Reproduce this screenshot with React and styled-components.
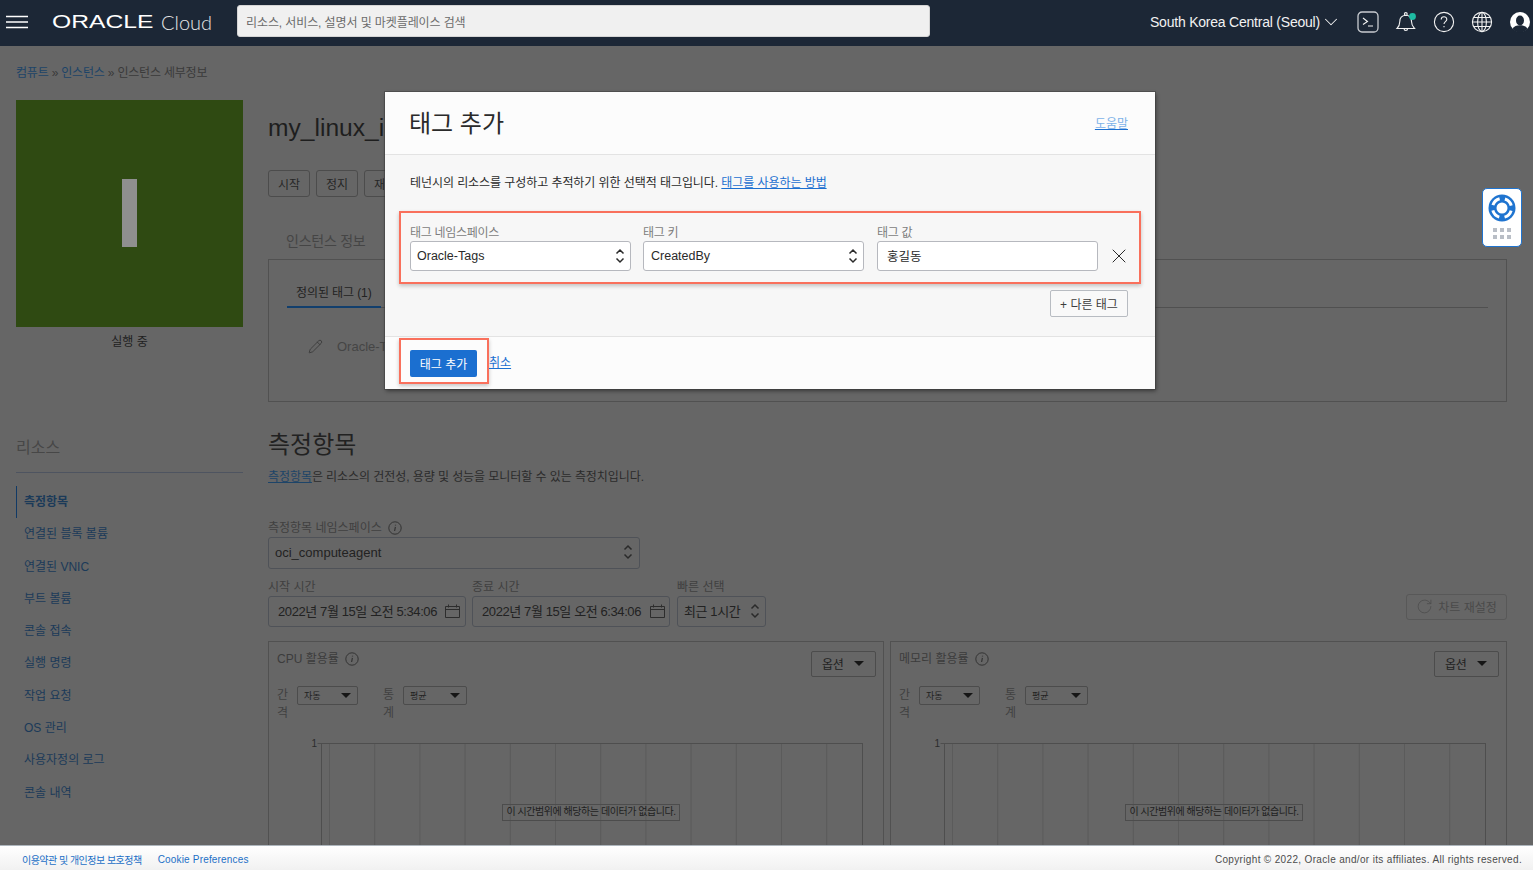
import React from 'react';
import styled, { createGlobalStyle } from 'styled-components';
import { ChevronDown, X, Pencil, RotateCw } from 'lucide-react';

const GlobalStyle = createGlobalStyle`
  html, body {
    margin: 0;
    height: 100%;
    overflow: hidden;
    font-family: 'Liberation Sans', 'Noto Sans CJK KR', sans-serif;
    font-size: 12px;
    color: #2b2b2b;
  }
  * {
    box-sizing: border-box;
  }
`;

const Page = styled.div`
  display: flex;
  flex-direction: column;
  height: 100vh;
`;

/* top bar */
const TopBar = styled.header`
  height: 46px;
  flex: none;
  padding-bottom: 3px;
  display: flex;
  align-items: center;
  background: #1c2736;
  color: #f2f2f2;
  > * {
    flex: none;
  }
`;

const Burger = styled.svg`
  margin-left: 6px;
  width: 22px;
  height: 14px;
`;

const LogoMark = styled.div`
  margin-left: 24px;
  width: 102px;
  height: 20px;
  display: flex;
  align-items: center;
`;

const LogoText = styled.span`
  font-family: 'Liberation Sans', sans-serif;
  font-size: 18px;
  line-height: 20px;
  color: #fff;
  transform: scale(1.37, 1);
  transform-origin: left center;
`;

const CloudText = styled.span`
  margin-left: 7px;
  width: 76px;
  font-family: 'Lato', sans-serif;
  font-weight: 300;
  font-size: 20px;
  color: #e6e6e6;
`;

const Search = styled.div`
  width: 693px;
  height: 32px;
  margin-top: -1px;
  padding-left: 8px;
  display: flex;
  align-items: center;
  background: #f0f0f0;
  border: 1px solid #d5d5d5;
  border-radius: 3px;
  color: #6b6b6b;
  font-size: 12px;
  letter-spacing: -0.1px;
`;

const Region = styled.div`
  margin-left: 220px;
  display: flex;
  align-items: center;
  font-size: 14px;
  letter-spacing: -0.22px;
  white-space: nowrap;
`;

const TopIcons = styled.div`
  margin-left: 15px;
  display: flex;
  align-items: center;
  gap: 16px;
`;

const TopIcon = styled.svg`
  width: 22px;
  height: 22px;
  display: block;
  fill: none;
  stroke: #f2f2f2;
  stroke-width: 1.1;
`;

/* dimmed page behind the dialog */
const Main = styled.main`
  position: relative;
  flex: 1;
  min-height: 0;
  overflow: hidden;
  padding-left: 16px;
  background: #666;
`;

const Crumbs = styled.div`
  margin-top: 19px;
  height: 14px;
  line-height: 16px;
  color: #3a3a3a;
  letter-spacing: -0.2px;
`;

const CrumbLink = styled.span`
  color: #1d4468;
`;

const Columns = styled.div`
  margin-top: 21px;
  display: flex;
  gap: 25px;
`;

const Sidebar = styled.aside`
  width: 227px;
  flex: none;
`;

const Tile = styled.div`
  width: 227px;
  height: 227px;
  padding-bottom: 2px;
  display: flex;
  align-items: center;
  justify-content: center;
  background: #2f4a12;
`;

const TileBar = styled.div`
  width: 15px;
  height: 68px;
  background: #8f8f8f;
`;

const TileState = styled.div`
  margin-top: 7px;
  line-height: 16px;
  text-align: center;
  color: #1f1f1f;
`;

const ResourceTitle = styled.h3`
  margin: 87px 0 0;
  padding-bottom: 13px;
  border-bottom: 1px solid #4e5460;
  font-size: 16px;
  line-height: 22px;
  font-weight: 400;
  color: #474747;
`;

const ResourceList = styled.ul`
  list-style: none;
  margin: 13px 0 0;
  padding: 0;
`;

const ResourceItem = styled.li`
  height: 32.3px;
  line-height: 32px;
  padding-left: ${(props) => (props.$active ? '7px' : '8px')};
  border-left: ${(props) => (props.$active ? '1px solid #113a66' : 'none')};
  font-weight: ${(props) => (props.$active ? 700 : 400)};
  color: #1b3a59;
`;

const Content = styled.section`
  width: 1239px;
  flex: none;
  padding-top: 13px;
`;

const Title = styled.h1`
  margin: 0;
  white-space: nowrap;
  font-size: 24.6px;
  line-height: 30px;
  font-weight: 400;
  color: #1e1e1e;
`;

const ActionRow = styled.div`
  margin-top: 27px;
  display: flex;
  gap: 6px;
`;

const GhostButton = styled.div`
  width: ${(props) => props.$width}px;
  height: 27px;
  padding: 0 9px 1px;
  display: flex;
  align-items: center;
  border: 1px solid #4c4c4c;
  border-radius: 3px;
  letter-spacing: -0.1px;
  color: #262626;
  white-space: nowrap;
`;

const InfoTab = styled.div`
  margin: 34px 0 0 18px;
  font-size: 14px;
  line-height: 20px;
  letter-spacing: -0.25px;
  color: #454545;
`;

const TagPanel = styled.div`
  margin-top: 8px;
  height: 143px;
  padding: 18px 18px 0;
  border: 1px solid #515151;
`;

const TagTabs = styled.div`
  height: 30px;
  border-bottom: 1px solid #505050;
`;

const TagTab = styled.div`
  width: 94px;
  height: 30px;
  padding: 7px 0 0 9px;
  border-bottom: 2px solid #123f6d;
  line-height: 16px;
  letter-spacing: -0.1px;
  color: #222;
  white-space: nowrap;
`;

const TagLine = styled.div`
  margin: 31px 0 0 21px;
  display: flex;
  align-items: center;
  gap: 14px;
  font-size: 13px;
  white-space: nowrap;
  color: #454545;
`;

const Heading = styled.h2`
  margin: 28px 0 0;
  font-size: 24px;
  line-height: 30px;
  font-weight: 400;
  color: #222;
`;

const Intro = styled.p`
  margin: 9px 0 0;
  line-height: 16px;
  letter-spacing: -0.07px;
  color: #2b2b2b;
`;

const Underlined = styled.span`
  color: #1d4468;
  text-decoration: underline;
`;

const FieldLabel = styled.div`
  height: 14px;
  line-height: 14px;
  padding-top: 1px;
  display: flex;
  align-items: center;
  gap: 6px;
  color: #404040;
  white-space: nowrap;
`;

const NamespaceField = styled.div`
  margin-top: 35px;
  width: 372px;
`;

const Control = styled.div`
  margin-top: 3px;
  height: ${(props) => props.$height}px;
  padding: 0 ${(props) => props.$right ?? 6}px 2px ${(props) => props.$left ?? 6}px;
  display: flex;
  align-items: center;
  justify-content: space-between;
  border: 1px solid #4f5258;
  border-radius: 3px;
  font-size: 13px;
  color: #222;
  white-space: nowrap;
`;

const DateControl = styled(Control)`
  letter-spacing: -0.4px;
`;

const FieldRow = styled.div`
  margin-top: 10px;
  display: flex;
  align-items: flex-start;
  gap: 6px;
`;

const Field = styled.div`
  width: ${(props) => props.$width}px;
  margin-right: ${(props) => props.$after ?? 0}px;
`;

const ResetButton = styled.div`
  margin: 15px 0 0 auto;
  width: 101px;
  height: 26px;
  padding-bottom: 1px;
  display: flex;
  align-items: center;
  justify-content: center;
  gap: 5px;
  border: 1px solid #585858;
  border-radius: 3px;
  color: #4a4a4a;
`;

const ChartGrid = styled.div`
  margin-top: 14px;
  display: grid;
  grid-template-columns: 616px 617px;
  gap: 6px;
`;

const Chart = styled.article`
  height: 300px;
  padding-top: 9px;
  border: 1px solid #515151;
`;

const ChartHead = styled.div`
  height: 26px;
  padding: 0 7px 0 8px;
  display: flex;
  justify-content: space-between;
`;

const ChartTitle = styled.div`
  height: 16px;
  line-height: 16px;
  display: flex;
  align-items: center;
  gap: 6px;
  color: #3c3c3c;
`;

const OptionButton = styled.div`
  width: 65px;
  height: 26px;
  padding: 0 11px 1px 10px;
  display: flex;
  align-items: center;
  justify-content: space-between;
  border: 1px solid #4c4c4c;
  border-radius: 2px;
  letter-spacing: -0.2px;
  color: #222;
`;

const ChartControls = styled.div`
  margin-top: 9px;
  padding-left: 8px;
  display: flex;
  align-items: flex-start;
`;

const StackedLabel = styled.div`
  width: 14px;
  margin-right: 6px;
  line-height: 18px;
  color: #414141;
`;

const MiniSelect = styled.div`
  width: ${(props) => props.$width}px;
  height: 19px;
  margin-right: 25px;
  padding: 0 6px 1px 6px;
  display: flex;
  align-items: center;
  justify-content: space-between;
  border: 1px solid #4c4c4c;
  border-radius: 2px;
  font-size: 9px;
  color: #222;
`;

const Caret = styled.i`
  width: 0;
  height: 0;
  border-left: ${(props) => props.$size}px solid transparent;
  border-right: ${(props) => props.$size}px solid transparent;
  border-top: ${(props) => props.$size}px solid #161616;
`;

const PlotWrap = styled.div`
  position: relative;
  margin-top: 16px;
  height: 120px;
`;

const PlotSvg = styled.svg`
  display: block;
  width: 100%;
  height: 120px;
`;

const NoData = styled.div`
  position: absolute;
  top: 66px;
  left: ${(props) => props.$left}px;
  width: 178px;
  height: 17px;
  line-height: 14px;
  text-align: center;
  border: 1px solid #4c4c4c;
  font-size: 10px;
  letter-spacing: -0.45px;
  color: #1f1f1f;
  white-space: nowrap;
`;

/* dialog */
const Dialog = styled.div`
  position: absolute;
  top: 46px;
  left: 385px;
  width: 770px;
  height: 297px;
  display: flex;
  flex-direction: column;
  background: #fcfcfc;
  box-shadow: 0 0 0 1px rgba(60, 60, 60, 0.5), 1px 2px 4px rgba(0, 0, 0, 0.45);
  color: #2a2a2a;
`;

const DialogHead = styled.div`
  height: 63px;
  flex: none;
  padding: 0 27px 0 24px;
  display: flex;
  align-items: center;
  justify-content: space-between;
  border-bottom: 1px solid #e3e3e3;
`;

const DialogTitle = styled.h2`
  margin: 2px 0 0;
  font-size: 24px;
  line-height: 30px;
  font-weight: 400;
  color: #2a2a2a;
`;

const HelpLink = styled.a`
  margin-bottom: 2px;
  color: #7db2e8;
  text-decoration: underline;
  text-decoration-color: #1b6fd0;
`;

const DialogBody = styled.div`
  height: 182px;
  flex: none;
  padding-top: 20px;
  background: #f7f7f7;
  border-bottom: 1px solid #e3e3e3;
`;

const Lead = styled.p`
  margin: 0 0 0 25px;
  line-height: 16px;
  letter-spacing: -0.07px;
`;

const DocLink = styled.a`
  color: #1b6fd0;
  text-decoration: underline;
`;

const Marked = styled.div`
  border: 2px solid #f9705c;
  box-shadow: 0 2px 4px rgba(0, 0, 0, 0.22);
`;

const TagRow = styled(Marked)`
  margin: 20px 14px 0;
  height: 73px;
  padding: 11px 0 11px 9px;
  display: flex;
  align-items: flex-end;
`;

const TagField = styled.div`
  width: 221px;
  flex: none;
  margin-right: ${(props) => props.$after}px;
`;

const TagLabel = styled.div`
  height: 14px;
  line-height: 14px;
  margin-bottom: 1px;
  letter-spacing: -0.3px;
  color: #7d7d7d;
`;

const TagInput = styled.div`
  height: 30px;
  padding: 0 5px 1px ${(props) => props.$left}px;
  display: flex;
  align-items: center;
  justify-content: space-between;
  background: #fff;
  border: 1px solid #b6b8be;
  border-radius: 3px;
  font-size: 12.5px;
  color: #2a2a2a;
`;

const RemoveIcon = styled(X)`
  margin: 0 0 3px 9px;
  flex: none;
`;

const AddRow = styled.div`
  margin: 6px 27px 0 0;
  display: flex;
  justify-content: flex-end;
`;

const AddButton = styled.div`
  width: 78px;
  height: 27px;
  display: flex;
  align-items: center;
  justify-content: center;
  background: #f9f9f9;
  border: 1px solid #b8bcc2;
  border-radius: 2px;
  color: #3c3c3c;
`;

const DialogFoot = styled.div`
  flex: 1;
  padding-left: 14px;
  display: flex;
  align-items: flex-start;
`;

const SubmitMark = styled(Marked)`
  margin-top: 1px;
  width: 90px;
  height: 46px;
  padding: 10px 0 0 9px;
`;

const SubmitButton = styled.div`
  width: 67px;
  height: 27px;
  padding-bottom: 1px;
  display: flex;
  align-items: center;
  justify-content: center;
  background: #1b6fd0;
  border-radius: 2px;
  color: #fff;
`;

const CancelLink = styled(DocLink)`
  margin-top: 18px;
  line-height: 16px;
`;

/* floating help widget */
const HelpWidget = styled.div`
  position: absolute;
  top: 142px;
  left: 1482px;
  width: 40px;
  height: 59px;
  padding-top: 5px;
  display: flex;
  flex-direction: column;
  align-items: center;
  gap: 6px;
  background: #fff;
  border: 1px solid #1f74d0;
  border-radius: 5px;
`;

const Dots = styled.div`
  display: grid;
  grid-template-columns: repeat(3, 4px);
  gap: 3px 3px;
`;

const Dot = styled.i`
  width: 4px;
  height: 4px;
  background: #b9bec6;
`;

/* bottom bar */
const BottomBar = styled.footer`
  height: 25px;
  flex: none;
  padding: 2px 11px 0 22px;
  display: flex;
  align-items: center;
  background: linear-gradient(#fff, #f1f1f1);
  border-top: 1px solid #aeb6bd;
  font-size: 10px;
`;

const BottomLink = styled.a`
  margin-right: 16px;
  color: #1b6fc6;
  letter-spacing: ${(props) => (props.$tight ? '-0.52px' : '0.18px')};
`;

const Copyright = styled.span`
  margin-left: auto;
  color: #4c4c4c;
  letter-spacing: 0.34px;
`;

const UpDown = ({ color = '#2a2a2a' }) => (
  <svg width="10" height="16" viewBox="0 0 10 16" fill="none" stroke={color} strokeWidth="1.5">
    <path d="M1.5 5.5 5 2l3.5 3.5M1.5 10.5 5 14l3.5-3.5" />
  </svg>
);

const InfoIcon = ({ size = 14 }) => (
  <svg width={size} height={size} viewBox="0 0 14 14" fill="none" stroke="#333" strokeWidth="1">
    <circle cx="7" cy="7" r="6.2" />
    <path d="M7.4 5.9 6.6 10M7.5 3.8v.8" strokeWidth="1.2" />
  </svg>
);

const CalendarIcon = () => (
  <svg width="15" height="14" viewBox="0 0 15 14" fill="none" stroke="#2d2d2d" strokeWidth="1">
    <path d="M.5 2.5h14v11H.5zM.5 5.5h14M3.5.5v3M11.5.5v3" />
  </svg>
);

const PlotLines = ({ shift }) => {
  const ticks = Array.from({ length: 12 }, (_, i) => 60.5 + shift + i * 45.2);
  const left = 52.5 + shift;
  const right = 593.5 + shift;
  return (
    <PlotSvg>
      {ticks.map((x) => (
        <line key={x} x1={x} x2={x} y1="5" y2="120" stroke="#5b5b5b" />
      ))}
      <line x1={left} x2={left} y1="5" y2="120" stroke="#4e4e4e" />
      <line x1={right} x2={right} y1="5" y2="120" stroke="#4e4e4e" />
      <line x1={left - 4} x2={right} y1="5.5" y2="5.5" stroke="#4e4e4e" />
      <text x={left - 10} y="9" fontSize="10" fill="#2c2c2c">1</text>
    </PlotSvg>
  );
};

const sections = ['측정항목', '연결된 블록 볼륨', '연결된 VNIC', '부트 볼륨', '콘솔 접속', '실행 명령', '작업 요청', 'OS 관리', '사용자정의 로그', '콘솔 내역'];

const charts = [
  { title: 'CPU 활용률', shift: 0, noData: 233, first: 61, second: 64 },
  { title: '메모리 활용률', shift: 1, noData: 234, first: 61, second: 63 },
];

const App = () => {
  return (
    <Page>
      <GlobalStyle />
      <TopBar>
        <Burger viewBox="0 0 22 14" stroke="#fff" strokeWidth="1.6">
          <path d="M0 1.5h22M0 7h22M0 12.5h22" />
        </Burger>
        <LogoMark>
          <LogoText>ORACLE</LogoText>
        </LogoMark>
        <CloudText>Cloud</CloudText>
        <Search>리소스, 서비스, 설명서 및 마켓플레이스 검색</Search>
        <Region>
          South Korea Central (Seoul)
          <ChevronDown size={22} strokeWidth={1.1} />
        </Region>
        <TopIcons>
          <TopIcon viewBox="0 0 22 22">
            <rect x="1" y="1" width="20" height="20" rx="4" stroke="#c9ccd1" strokeWidth="1.3" />
            <path d="m6 7 4.5 3.5L6 13.5M11 15h5" />
          </TopIcon>
          <TopIcon viewBox="0 0 22 22">
            <path d="M2 17.5c2-2 2.8-3.5 2.8-7 0-3.6 2.2-6 5.7-6.3 3.8 0 6 2.7 6 6.3 0 3.5 1 5 3 7z" />
            <circle cx="10.8" cy="3" r="1.4" />
            <path d="M9 17.5c0 2.6 3.6 2.6 3.6 0" />
            <circle cx="17.5" cy="5.5" r="3.4" fill="#1ebba3" stroke="none" />
          </TopIcon>
          <TopIcon viewBox="0 0 22 22">
            <circle cx="11" cy="11" r="9.6" />
            <path d="M8.2 8.6c0-3.7 5.6-3.7 5.6-.2 0 2.2-2.8 2.3-2.8 4.6M11 15v1.2" />
          </TopIcon>
          <TopIcon viewBox="0 0 22 22">
            <circle cx="11" cy="11" r="9.6" />
            <ellipse cx="11" cy="11" rx="4.4" ry="9.6" />
            <path d="M11 1.4v19.2M1.4 11h19.2M2.7 6.5h16.6M2.7 15.5h16.6" />
          </TopIcon>
          <TopIcon viewBox="0 0 22 22" style={{ stroke: 'none' }}>
            <circle cx="11" cy="11" r="10" fill="#fff" />
            <ellipse cx="11" cy="9.5" rx="4" ry="5" fill="#1c2736" />
            <path d="M3.5 18c1.5-3 4-3.8 7.5-3.8s6 .8 7.5 3.8a10 10 0 0 1-15 0z" fill="#1c2736" />
          </TopIcon>
        </TopIcons>
      </TopBar>

      <Main>
        <Crumbs>
          <CrumbLink>컴퓨트</CrumbLink> » <CrumbLink>인스턴스</CrumbLink> » 인스턴스 세부정보
        </Crumbs>
        <Columns>
          <Sidebar>
            <Tile>
              <TileBar />
            </Tile>
            <TileState>실행 중</TileState>
            <ResourceTitle>리소스</ResourceTitle>
            <ResourceList>
              {sections.map((name, index) => (
                <ResourceItem key={name} $active={index === 0}>{name}</ResourceItem>
              ))}
            </ResourceList>
          </Sidebar>

          <Content>
            <Title>my_linux_i</Title>
            <ActionRow>
              <GhostButton $width={42}>시작</GhostButton>
              <GhostButton $width={42}>정지</GhostButton>
              <GhostButton $width={42}>재</GhostButton>
            </ActionRow>
            <InfoTab>인스턴스 정보</InfoTab>
            <TagPanel>
              <TagTabs>
                <TagTab>정의된 태그 (1)</TagTab>
              </TagTabs>
              <TagLine>
                <Pencil size={15} strokeWidth={1.2} color="#333" />
                Oracle-T
              </TagLine>
            </TagPanel>

            <Heading>측정항목</Heading>
            <Intro>
              <Underlined>측정항목</Underlined>은 리소스의 건전성, 용량 및 성능을 모니터할 수 있는 측정치입니다.
            </Intro>
            <NamespaceField>
              <FieldLabel>측정항목 네임스페이스 <InfoIcon /></FieldLabel>
              <Control $height={32}>
                oci_computeagent
                <UpDown />
              </Control>
            </NamespaceField>
            <FieldRow>
              <Field $width={198}>
                <FieldLabel>시작 시간</FieldLabel>
                <DateControl $height={31} $left={9} $right={5}>
                  2022년 7월 15일 오전 5:34:06
                  <CalendarIcon />
                </DateControl>
              </Field>
              <Field $width={198} $after={1}>
                <FieldLabel>종료 시간</FieldLabel>
                <DateControl $height={31} $left={9} $right={4}>
                  2022년 7월 15일 오전 6:34:06
                  <CalendarIcon />
                </DateControl>
              </Field>
              <Field $width={89}>
                <FieldLabel>빠른 선택</FieldLabel>
                <DateControl $height={31} $left={6} $right={5}>
                  최근 1시간
                  <UpDown />
                </DateControl>
              </Field>
              <ResetButton>
                <RotateCw size={17} strokeWidth={1} color="#4a4a4a" />
                차트 재설정
              </ResetButton>
            </FieldRow>
            <ChartGrid>
              {charts.map((chart) => (
                <Chart key={chart.title}>
                  <ChartHead>
                    <ChartTitle>{chart.title} <InfoIcon /></ChartTitle>
                    <OptionButton>옵션 <Caret $size={5} /></OptionButton>
                  </ChartHead>
                  <ChartControls>
                    <StackedLabel>간격</StackedLabel>
                    <MiniSelect $width={chart.first}>자동 <Caret $size={5} /></MiniSelect>
                    <StackedLabel>통계</StackedLabel>
                    <MiniSelect $width={chart.second}>평균 <Caret $size={5} /></MiniSelect>
                  </ChartControls>
                  <PlotWrap>
                    <PlotLines shift={chart.shift} />
                    <NoData $left={chart.noData}>이 시간범위에 해당하는 데이터가 없습니다.</NoData>
                  </PlotWrap>
                </Chart>
              ))}
            </ChartGrid>
          </Content>
        </Columns>

        <Dialog>
          <DialogHead>
            <DialogTitle>태그 추가</DialogTitle>
            <HelpLink>도움말</HelpLink>
          </DialogHead>
          <DialogBody>
            <Lead>
              테넌시의 리소스를 구성하고 추적하기 위한 선택적 태그입니다. <DocLink>태그를 사용하는 방법</DocLink>
            </Lead>
            <TagRow>
              <TagField $after={12}>
                <TagLabel>태그 네임스페이스</TagLabel>
                <TagInput $left={6}>Oracle-Tags<UpDown /></TagInput>
              </TagField>
              <TagField $after={13}>
                <TagLabel>태그 키</TagLabel>
                <TagInput $left={7}>CreatedBy<UpDown /></TagInput>
              </TagField>
              <TagField $after={0}>
                <TagLabel>태그 값</TagLabel>
                <TagInput $left={9}>홍길동</TagInput>
              </TagField>
              <RemoveIcon size={24} strokeWidth={1} color="#2a2a2a" />
            </TagRow>
            <AddRow>
              <AddButton>+ 다른 태그</AddButton>
            </AddRow>
          </DialogBody>
          <DialogFoot>
            <SubmitMark>
              <SubmitButton>태그 추가</SubmitButton>
            </SubmitMark>
            <CancelLink>취소</CancelLink>
          </DialogFoot>
        </Dialog>

        <HelpWidget>
          <svg width="28" height="28" viewBox="0 0 28 28" fill="none">
            <circle cx="14" cy="14" r="13.5" fill="#1f74d0" />
            <circle cx="14" cy="14" r="9.5" stroke="#fff" strokeWidth="3" strokeDasharray="9.5 5.42" strokeDashoffset="-2.7" />
            <circle cx="14" cy="14" r="5.5" fill="#fff" />
          </svg>
          <Dots>
            {Array.from({ length: 6 }, (_, i) => <Dot key={i} />)}
          </Dots>
        </HelpWidget>
      </Main>

      <BottomBar>
        <BottomLink $tight>이용약관 및 개인정보 보호정책</BottomLink>
        <BottomLink>Cookie Preferences</BottomLink>
        <Copyright>Copyright © 2022, Oracle and/or its affiliates. All rights reserved.</Copyright>
      </BottomBar>
    </Page>
  );
};

export default App;
